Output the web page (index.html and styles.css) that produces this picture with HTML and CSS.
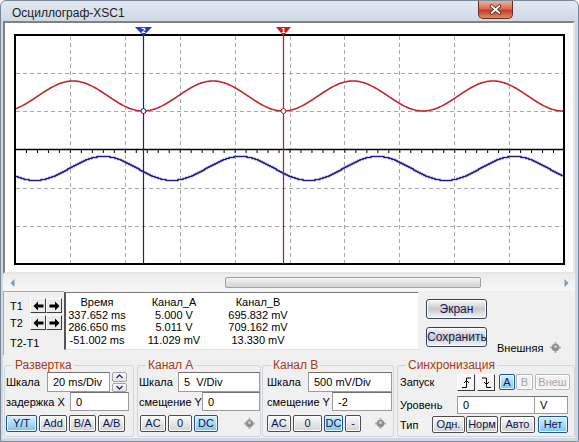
FILE: index.html
```html
<!DOCTYPE html>
<html>
<head>
	<meta charset="utf-8">
	<title>Осциллограф-XSC1</title>
	<link rel="stylesheet" href="styles.css">
</head>
<body>
<div class="window">

 <!--========== TITLE BAR =============-->
 <div class="titlebar">
  <span class="titlebar__text">Осциллограф-XSC1</span>
  <div class="titlebar__close">
   <svg width="13" height="11" viewBox="0 0 13 11">
    <path class="x__shade" d="M2.5 2 L10.5 9 M10.5 2 L2.5 9"/>
    <path class="x__mark" d="M2.5 2 L10.5 9 M10.5 2 L2.5 9"/>
   </svg>
  </div>
 </div>

 <div class="client">

  <!--========== SCOPE SCREEN =============-->
  <div class="scope">
   <svg class="scope__svg" width="568" height="249" viewBox="5 23 568 249">
    <g class="grid">
     <line x1="70.5" y1="36" x2="70.5" y2="263"/>
     <line x1="125.5" y1="36" x2="125.5" y2="263"/>
     <line x1="180.5" y1="36" x2="180.5" y2="263"/>
     <line x1="235.5" y1="36" x2="235.5" y2="263"/>
     <line x1="290.5" y1="36" x2="290.5" y2="263"/>
     <line x1="344.5" y1="36" x2="344.5" y2="263"/>
     <line x1="399.5" y1="36" x2="399.5" y2="263"/>
     <line x1="454.5" y1="36" x2="454.5" y2="263"/>
     <line x1="509.5" y1="36" x2="509.5" y2="263"/>
     <line x1="16" y1="73.5" x2="563" y2="73.5"/>
     <line x1="16" y1="111.5" x2="563" y2="111.5"/>
     <line x1="16" y1="188.5" x2="563" y2="188.5"/>
     <line x1="16" y1="226.5" x2="563" y2="226.5"/>
    </g>
    <line class="axis" x1="15" y1="149.5" x2="564" y2="149.5"/>
    <line class="ticks" x1="15" y1="151.5" x2="564" y2="151.5"/>

    <polyline id="traceA" class="trace trace--a" points=""/>
    <polyline id="traceB" class="trace trace--b" points=""/>

    <rect class="frame" x="15" y="35" width="549" height="229"/>

    <line class="cursor cursor--2" x1="143.5" y1="30" x2="143.5" y2="264"/>
    <line class="cursor cursor--1" x1="283.5" y1="30" x2="283.5" y2="264"/>
    <polygon class="flag flag--2" points="135,27 152,27 143.5,36"/>
    <polygon class="flag flag--1" points="276,27 291,27 283.5,36"/>
    <text class="flag__num" x="143.5" y="32.5">2</text>
    <text class="flag__num" x="283.5" y="32.5">1</text>

    <circle class="probe probe--2" cx="143.5" cy="111" r="2.5"/>
    <circle class="probe probe--1" cx="283.5" cy="111" r="2.5"/>
   </svg>
  </div>

  <!--========== SCROLL BAR =============-->
  <div class="hscroll">
   <div class="hscroll__arrow">
    <svg width="5" height="8" viewBox="0 0 5 8"><path class="tri" d="M4.5 0 L0.5 4 L4.5 8 Z"/></svg>
   </div>
   <div class="hscroll__track"><div class="hscroll__thumb"></div></div>
   <div class="hscroll__arrow">
    <svg width="5" height="8" viewBox="0 0 5 8"><path class="tri" d="M0.5 0 L4.5 4 L0.5 8 Z"/></svg>
   </div>
  </div>

  <!--========== CURSOR READOUT =============-->
  <div class="readout">
   <div class="tbox">
    <div class="trow">
     <span class="tlabel">T1</span>
     <span class="tarrow"><svg width="11" height="10" viewBox="0 0 11 10"><path class="arr" d="M0.5 5 L5 0.5 L5 3.5 L10.5 3.5 L10.5 6.5 L5 6.5 L5 9.5 Z"/></svg></span>
     <span class="tarrow"><svg width="11" height="10" viewBox="0 0 11 10"><path class="arr" d="M10.5 5 L6 0.5 L6 3.5 L0.5 3.5 L0.5 6.5 L6 6.5 L6 9.5 Z"/></svg></span>
    </div>
    <div class="trow">
     <span class="tlabel">T2</span>
     <span class="tarrow"><svg width="11" height="10" viewBox="0 0 11 10"><path class="arr" d="M0.5 5 L5 0.5 L5 3.5 L10.5 3.5 L10.5 6.5 L5 6.5 L5 9.5 Z"/></svg></span>
     <span class="tarrow"><svg width="11" height="10" viewBox="0 0 11 10"><path class="arr" d="M10.5 5 L6 0.5 L6 3.5 L0.5 3.5 L0.5 6.5 L6 6.5 L6 9.5 Z"/></svg></span>
    </div>
    <div class="trow trow--diff"><span class="tlabel">T2-T1</span></div>
   </div>

   <div class="data">
    <div class="data__grid">
     <span>Время</span><span>Канал_A</span><span>Канал_B</span>
     <span>337.652 ms</span><span>5.000 V</span><span>695.832 mV</span>
     <span>286.650 ms</span><span>5.011 V</span><span>709.162 mV</span>
     <span>-51.002 ms</span><span>11.029 mV</span><span>13.330 mV</span>
    </div>
   </div>

   <div class="side">
    <div class="side__btns">
     <div class="bigbtn">Экран</div>
     <div class="bigbtn">Сохранить</div>
    </div>
    <div class="side__ext">
     <span>Внешняя</span>
     <svg class="led" width="11" height="11" viewBox="0 0 11 11">
      <rect class="led__nub" x="4.5" y="0" width="2" height="11"/>
      <rect class="led__nub" x="0" y="4.5" width="11" height="2"/>
      <circle class="led__body" cx="5.5" cy="5.5" r="3.8"/>
      <circle class="led__shine" cx="5.5" cy="4.5" r="1.6"/>
     </svg>
    </div>
   </div>
  </div>

  <!--========== CONTROL GROUPS =============-->
  <div class="controls">

   <fieldset class="group group--sweep">
    <legend>Развертка</legend>
    <div class="row">
     <span class="lbl" style="width:41px">Шкала</span>
     <input class="field" style="width:63px" type="text" value="20 ms/Div">
     <div class="spin">
      <span class="spin__btn"><svg width="7" height="5" viewBox="0 0 7 5"><path class="chev" d="M0.5 4 L3.5 1 L6.5 4"/></svg></span>
      <span class="spin__btn"><svg width="7" height="5" viewBox="0 0 7 5"><path class="chev" d="M0.5 1 L3.5 4 L6.5 1"/></svg></span>
     </div>
    </div>
    <div class="row row--second">
     <span class="lbl" style="width:64px">задержка X</span>
     <input class="field" style="width:59px" type="text" value="0">
    </div>
    <div class="row row--btns">
     <span class="btn btn--on" style="width:31px">Y/T</span>
     <span class="btn" style="width:28px">Add</span>
     <span class="btn" style="width:27px">B/A</span>
     <span class="btn" style="width:27px">A/B</span>
    </div>
   </fieldset>

   <fieldset class="group group--cha">
    <legend>Канал А</legend>
    <div class="row">
     <span class="lbl" style="width:39px">Шкала</span>
     <input class="field" style="width:82px" type="text" value="5  V/Div">
    </div>
    <div class="row row--second">
     <span class="lbl" style="width:63px">смещение Y</span>
     <input class="field" style="width:58px" type="text" value="0">
    </div>
    <div class="row row--btns">
     <span class="btn" style="width:26px;margin-left:1px">AC</span>
     <span class="btn" style="width:24px">0</span>
     <span class="btn btn--on" style="width:24px">DC</span>
     <svg class="led led--ch" width="11" height="11" viewBox="0 0 11 11">
      <rect class="led__nub" x="4.5" y="0" width="2" height="11"/>
      <rect class="led__nub" x="0" y="4.5" width="11" height="2"/>
      <circle class="led__body" cx="5.5" cy="5.5" r="3.8"/>
      <circle class="led__shine" cx="5.5" cy="4.5" r="1.6"/>
     </svg>
    </div>
   </fieldset>

   <fieldset class="group group--chb">
    <legend>Канал В</legend>
    <div class="row">
     <span class="lbl" style="width:41px">Шкала</span>
     <input class="field" style="width:84px" type="text" value="500 mV/Div">
    </div>
    <div class="row row--second">
     <span class="lbl" style="width:65px">смещение Y</span>
     <input class="field" style="width:60px" type="text" value="-2">
    </div>
    <div class="row row--btns">
     <span class="btn" style="width:24px;margin-left:3px">AC</span>
     <span class="btn" style="width:29px">0</span>
     <span class="btn btn--on" style="width:19px">DC</span>
     <span class="btn" style="width:16px">-</span>
     <svg class="led led--chb" width="11" height="11" viewBox="0 0 11 11">
      <rect class="led__nub" x="4.5" y="0" width="2" height="11"/>
      <rect class="led__nub" x="0" y="4.5" width="11" height="2"/>
      <circle class="led__body" cx="5.5" cy="5.5" r="3.8"/>
      <circle class="led__shine" cx="5.5" cy="4.5" r="1.6"/>
     </svg>
    </div>
   </fieldset>

   <fieldset class="group group--sync">
    <legend>Синхронизация</legend>
    <div class="row">
     <span class="lbl" style="width:57px">Запуск</span>
     <span class="edge"><svg width="11" height="11" viewBox="0 0 11 11"><path class="edge__line" d="M1 10.5 H5.5 V1 H10"/><path class="edge__line" d="M3 6 L5.5 3.5 L8 6"/></svg></span>
     <span class="edge"><svg width="11" height="11" viewBox="0 0 11 11"><path class="edge__line" d="M1 1 H5.5 V10.5 H10"/><path class="edge__line" d="M3 5 L5.5 7.5 L8 5"/></svg></span>
     <span class="btn btn--on btn--small" style="width:16px">A</span>
     <span class="btn btn--off btn--small" style="width:17px;margin-left:1px">B</span>
     <span class="btn btn--off btn--small" style="width:35px">Внеш</span>
    </div>
    <div class="row row--level">
     <span class="lbl" style="width:57px">Уровень</span>
     <input class="field field--level" style="width:78px" type="text" value="0">
     <span class="field field--unit" style="width:33px">V</span>
    </div>
    <div class="row row--btns">
     <span class="lbl" style="width:32px">Тип</span>
     <span class="btn" style="width:33px;margin-left:0">Одн.</span>
     <span class="btn" style="width:32px;margin-left:1px">Норм</span>
     <span class="btn" style="width:35px">Авто</span>
     <span class="btn btn--on" style="width:30px;margin-left:3px">Нет</span>
    </div>
   </fieldset>

  </div>
 </div>
</div>

<script src="scope.js"></script>
</body>
</html>
```

FILE: styles.css
```css
*{
	margin: 0;
	padding: 0;
	box-sizing: border-box;
}

body{
	font-family: "Liberation Sans", Arial, sans-serif;
	font-size: 11px;
	color: #000;
	background: #fff;
}

/*========= WINDOW FRAME =========*/
.window{
	width: 579px;
	height: 442px;
	border: 1px solid #7b8898;
	border-radius: 6px 6px 0 0;
	background: linear-gradient(#e3e9f1, #ccd7e4 22px, #cfd9e5);
	padding: 0 3px 3px 2px;
	display: flex;
	flex-direction: column;
	overflow: hidden;
}

.titlebar{
	height: 20px;
	display: flex;
	align-items: flex-start;
	padding-left: 9px;
	flex-shrink: 0;
}

.titlebar__text{
	font-size: 12px;
	line-height: 15px;
	padding-top: 5px;
	color: #1b1b1b;
}

.titlebar__close{
	margin-left: auto;
	margin-right: 62px;
	width: 35px;
	height: 18px;
	border: 1px solid #6c2c20;
	border-top: none;
	border-radius: 0 0 5px 5px;
	background: linear-gradient(#eab1a3, #d96c53 45%, #c63d22 55%, #dc8a6e);
	display: flex;
	align-items: center;
	justify-content: center;
}

.x__shade{
	fill: none;
	stroke: #4a1e16;
	stroke-width: 3.4;
	stroke-linecap: round;
}

.x__mark{
	fill: none;
	stroke: #fff;
	stroke-width: 1.8;
	stroke-linecap: round;
}

.client{
	flex: 1;
	background: #f0f0f0;
	display: flex;
	flex-direction: column;
}

/*========= SCOPE SCREEN =========*/
.scope{
	height: 253px;
	border: 2px solid;
	border-color: #828282 #e6e6e6 #e6e6e6 #828282;
	background: #fff;
	flex-shrink: 0;
}

.scope__svg{
	display: block;
}

.grid line{
	stroke: #a8a8a8;
	stroke-width: 1;
	stroke-dasharray: 4 3;
}

.axis{
	stroke: #000;
	stroke-width: 1.5;
}

.ticks{
	stroke: #000;
	stroke-width: 3;
	stroke-dasharray: 1 9.98;
}

.frame{
	fill: none;
	stroke: #000;
	stroke-width: 2;
}

.trace{
	fill: none;
}

.trace--a{
	stroke: #c0262c;
	stroke-width: 1.6;
}

.trace--b{
	stroke: #1d1d8e;
	stroke-width: 1.4;
}

.cursor--1{
	stroke: #b01e25;
	stroke-width: 1.2;
}

.cursor--2{
	stroke: #1d1d8e;
	stroke-width: 1.2;
}

.flag--1{
	fill: #d8141c;
}

.flag--2{
	fill: #1f3ccc;
}

.flag__num{
	fill: #fff;
	font-family: "DejaVu Sans", sans-serif;
	font-weight: bold;
	font-size: 7px;
	text-anchor: middle;
}

.probe{
	fill: #fff;
	stroke-width: 1;
}

.probe--1{
	stroke: #b01e25;
}

.probe--2{
	stroke: #1d1d8e;
}

/*========= SCROLL BAR =========*/
.hscroll{
	height: 17px;
	display: flex;
	background: linear-gradient(#ececec, #f7f7f7);
	flex-shrink: 0;
}

.hscroll__arrow{
	width: 18px;
	display: flex;
	align-items: center;
	justify-content: center;
}

.tri{
	fill: #7d98b9;
}

.hscroll__track{
	flex: 1;
	padding-top: 3px;
}

.hscroll__thumb{
	margin-left: 204px;
	width: 256px;
	height: 11px;
	border: 1px solid #a2a2a2;
	border-radius: 2px;
	background: linear-gradient(#f6f6f6, #e2e2e2 50%, #d6d6d6);
}

/*========= READOUT =========*/
.readout{
	height: 64px;
	display: flex;
	flex-shrink: 0;
}

.tbox{
	width: 61px;
	border-top: 1px solid #a9a9a9;
	border-left: 1px solid #a9a9a9;
	padding-top: 5px;
}

.trow{
	display: flex;
	align-items: center;
	height: 17px;
}

.trow--diff{
	height: 22px;
	padding-top: 2px;
}

.tlabel{
	width: 26px;
	padding-left: 6px;
	white-space: nowrap;
}

.tarrow{
	width: 16px;
	height: 15px;
	margin-right: 0;
	border: 1px solid;
	border-color: #fff #3c3c3c #3c3c3c #fff;
	background: #ececec;
	display: flex;
	align-items: center;
	justify-content: center;
}

.arr{
	fill: #000;
}

.data{
	width: 354px;
	height: 58px;
	margin-top: 1px;
	background: #fff;
	border-top: 1px solid #7a7a7a;
	border-left: 2px solid #555;
	border-bottom: 1px solid #e2e2e2;
}

.data__grid{
	display: grid;
	grid-template-columns: 62px 92px 76px;
	padding-top: 3px;
	line-height: 12.5px;
	text-align: center;
	white-space: nowrap;
}

.side{
	flex: 1;
	display: flex;
}

.side__btns{
	margin-left: 8px;
	padding-top: 8px;
	display: flex;
	flex-direction: column;
	gap: 8px;
}

.bigbtn{
	width: 61px;
	height: 20px;
	border: 1px solid #35445a;
	border-radius: 3px;
	background: linear-gradient(#fafafa, #c9c9c9 50%, #f6f6f6);
	box-shadow: inset 0 0 0 1px #fff;
	color: #13205a;
	font-size: 12px;
	line-height: 18px;
	text-align: center;
	white-space: nowrap;
}

.side__ext{
	display: flex;
	align-items: center;
	align-self: flex-end;
	margin-left: 10px;
	margin-bottom: 1px;
	height: 13px;
}

.side__ext .led{
	margin-left: 7px;
}

.led__nub{
	fill: #b4b4b4;
}

.led__body{
	fill: #8f8f8f;
}

.led__shine{
	fill: #c8c8c8;
}

/*========= CONTROL GROUPS =========*/
.controls{
	display: flex;
	padding-left: 1px;
	margin-top: 3px;
	height: 79px;
	flex-shrink: 0;
}

.group{
	height: 79px;
	border: 1px solid #cfd6dc;
	border-radius: 3px;
	padding: 0 1px 0 1px;
	min-width: 0;
}

.group legend{
	color: #a43c18;
	font-size: 12px;
	line-height: 14px;
	margin-left: 7px;
	padding: 0 2px;
}

.group--sweep{
	width: 130px;
}

.group--cha{
	width: 124px;
	margin-left: 3px;
}

.group--chb{
	width: 132px;
	margin-left: 1px;
}

.group--chb .lbl{
	margin-left: 3px;
}

.group--sync{
	width: 178px;
	margin-left: 3px;
}

.group--sync .lbl{
	margin-left: 1px;
}

.row{
	display: flex;
	align-items: center;
	height: 20px;
}

.row--second{
	margin-top: 0;
	height: 19px;
}

.row--level{
	margin-top: 4px;
	height: 18px;
}

.row--btns{
	margin-top: 4px;
	height: 17px;
}

.group--sync .row--btns{
	margin-top: 2px;
}

.lbl{
	white-space: nowrap;
	flex-shrink: 0;
}

.field{
	height: 100%;
	border: 1px solid #9c9c9c;
	border-top-color: #707070;
	background: #fff;
	font-family: "Liberation Sans", Arial, sans-serif;
	font-size: 11px;
	color: #000;
	padding-left: 5px;
	outline: none;
	flex-shrink: 0;
}

.field--unit{
	display: flex;
	align-items: center;
	padding-left: 5px;
	border-left: none;
}

.spin{
	width: 15px;
	height: 20px;
	margin-left: 2px;
	display: flex;
	flex-direction: column;
	gap: 1px;
}

.spin__btn{
	flex: 1;
	border: 1px solid #a5a5a5;
	border-radius: 2px;
	background: linear-gradient(#fdfdfd, #e3e3e3);
	display: flex;
	align-items: center;
	justify-content: center;
}

.chev{
	fill: none;
	stroke: #1e2f78;
	stroke-width: 1.3;
}

.btn{
	height: 17px;
	margin-left: 2px;
	border: 1px solid #4c4c4c;
	border-radius: 2px;
	background: linear-gradient(#fdfdfd, #e6e6e6 50%, #d2d2d2);
	box-shadow: inset 0 0 0 1px #fff;
	color: #0d1550;
	line-height: 15px;
	text-align: center;
	white-space: nowrap;
	overflow: hidden;
	flex-shrink: 0;
}

.row--btns .btn:first-child{
	margin-left: 0;
}

.btn--on{
	border-color: #1f5596;
	background: linear-gradient(#d9f0fd, #a9dbf8 50%, #80c4f0);
	box-shadow: inset 0 0 0 1px #e8f6ff;
}

.btn--off{
	color: #a6a6a6;
	border-color: #b6b6b6;
	background: #f3f3f3;
}

.btn--small{
	height: 16px;
	line-height: 14px;
}

.edge{
	width: 18px;
	height: 17px;
	margin-right: 2px;
	border: 1px solid;
	border-color: #fff #3c3c3c #3c3c3c #fff;
	background: #f7f7f7;
	display: flex;
	align-items: center;
	justify-content: center;
	flex-shrink: 0;
}

.edge__line{
	fill: none;
	stroke: #000;
	stroke-width: 1;
}

.led--ch{
	margin-left: 26px;
}

.led--chb{
	margin-left: 14px;
}
```

FILE: scope.js
```js
/*========= DRAW THE TWO CHANNEL TRACES =========*/
function drawTrace(id, mid, amp, peakX, period, stepped){
	let pts = [];
	let prev = null;

	for( let x = 16; x <= 563; x++ ){
		let y = mid - amp * Math.cos(2 * Math.PI * (x - peakX) / period);

		if(stepped){
			y = Math.round(y) + 0.5;
			if(prev !== null && prev !== y){
				pts.push(x + ',' + prev);
			}
			prev = y;
		}
		pts.push(x + ',' + y.toFixed(2));
	}
	document.getElementById(id).setAttribute('points', pts.join(' '));
}

drawTrace('traceA', 96, 15, 213, 140, false);
drawTrace('traceB', 168, 12, 103, 137, true);
```
